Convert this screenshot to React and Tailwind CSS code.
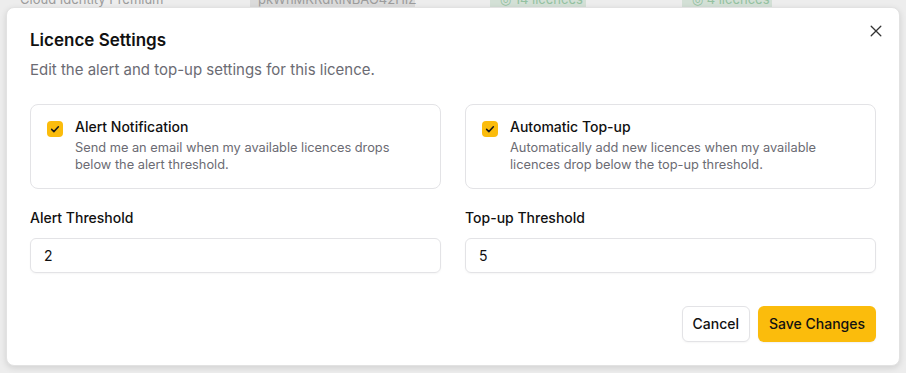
import { useState } from 'react'

function Check() {
  return (
    <svg viewBox="0 0 16 16" className="w-3 h-3" fill="none" stroke="currentColor" strokeWidth="2" strokeLinecap="round" strokeLinejoin="round">
      <path d="M3.5 8.5l3 3 6-6.5" />
    </svg>
  )
}

function ToggleCard({ title, desc, checked, onChange }) {
  return (
    <label className="flex items-start gap-3 rounded-lg border border-[#e3e3e6] px-4 pt-3 pb-[15px] cursor-pointer">
      <button
        type="button"
        onClick={onChange}
        className={`mt-1 w-4 h-4 shrink-0 rounded-[4px] flex items-center justify-center text-[#1a1a1a] ${checked ? 'bg-[#fbbc0c]' : 'bg-white border border-gray-300'}`}
      >
        {checked && <Check />}
      </button>
      <div>
        <p className="text-sm font-medium text-[#111] leading-5">{title}</p>
        <p className="mt-[3px] text-[12.8px] text-[#6b6b73] leading-[16.5px]">{desc}</p>
      </div>
    </label>
  )
}

export default function App() {
  const [alert, setAlert] = useState(true)
  const [topup, setTopup] = useState(true)

  return (
    <div className="relative w-[906px] h-[373px] overflow-hidden bg-white" style={{ fontFamily: 'Inter, "Liberation Sans", sans-serif' }}>
      {/* table behind the dialog */}
      <div className="flex items-center h-[16px] -mt-[8px] text-[13px] text-[#a8a8a8]">
        <span className="ml-[20px] w-[230px] whitespace-nowrap">Cloud Identity Premium</span>
        <span className="w-[165px] px-2 bg-[#ececec] rounded whitespace-nowrap">pkWhMKRdRINBAO42HIZ</span>
        <span className="ml-[75px] w-[96px] px-[10px] text-[#9fd0ad] bg-[#e3f2e7] rounded whitespace-nowrap">◎ 14 licences</span>
        <span className="ml-[96px] w-[90px] px-[10px] text-[#9fd0ad] bg-[#e3f2e7] rounded whitespace-nowrap">◎ 4 licences</span>
      </div>

      {/* overlay */}
      <div className="absolute inset-0 bg-black/[0.07]" />

      {/* dialog */}
      <div className="absolute left-[6px] top-[7px] w-[894px] rounded-lg bg-white shadow-[0_2px_6px_rgba(0,0,0,0.12)] border border-[#e2e2e2] px-[23px] pt-5 pb-[23px]">
        <button className="absolute right-[15px] top-[15px] text-[#333]">
          <svg viewBox="0 0 16 16" className="w-4 h-4" fill="none" stroke="currentColor" strokeWidth="1.3" strokeLinecap="round">
            <path d="M3.2 3.2l9.6 9.6M12.8 3.2l-9.6 9.6" />
          </svg>
        </button>

        <h2 className="text-[17px] font-semibold text-[#111] leading-6">Licence Settings</h2>
        <p className="mt-[6px] text-[15px] text-[#6b6b73] leading-6">Edit the alert and top-up settings for this licence.</p>

        <div className="mt-[22px] grid grid-cols-2 gap-6">
          <ToggleCard
            title="Alert Notification"
            desc="Send me an email when my available licences drops below the alert threshold."
            checked={alert}
            onChange={() => setAlert(!alert)}
          />
          <ToggleCard
            title="Automatic Top-up"
            desc="Automatically add new licences when my available licences drop below the top-up threshold."
            checked={topup}
            onChange={() => setTopup(!topup)}
          />
        </div>

        <div className="mt-[19px] grid grid-cols-2 gap-6">
          <div>
            <p className="text-sm font-medium text-[#111] leading-5">Alert Threshold</p>
            <input defaultValue="2" className="mt-[10px] w-full h-[35px] rounded-md border border-[#e3e3e6] px-[13px] text-sm text-[#111] shadow-[0_1px_2px_rgba(0,0,0,0.04)]" />
          </div>
          <div>
            <p className="text-sm font-medium text-[#111] leading-5">Top-up Threshold</p>
            <input defaultValue="5" className="mt-[10px] w-full h-[35px] rounded-md border border-[#e3e3e6] px-[13px] text-sm text-[#111] shadow-[0_1px_2px_rgba(0,0,0,0.04)]" />
          </div>
        </div>

        <div className="mt-[33px] flex justify-end gap-2">
          <button className="h-9 px-[10px] rounded-md border border-[#e3e3e6] bg-white text-sm font-medium text-[#111] shadow-[0_1px_2px_rgba(0,0,0,0.04)]">Cancel</button>
          <button className="h-9 px-[11px] rounded-md bg-[#fbbc0c] text-sm font-medium text-[#111] shadow-[0_1px_2px_rgba(0,0,0,0.06)]">Save Changes</button>
        </div>
      </div>
    </div>
  )
}
